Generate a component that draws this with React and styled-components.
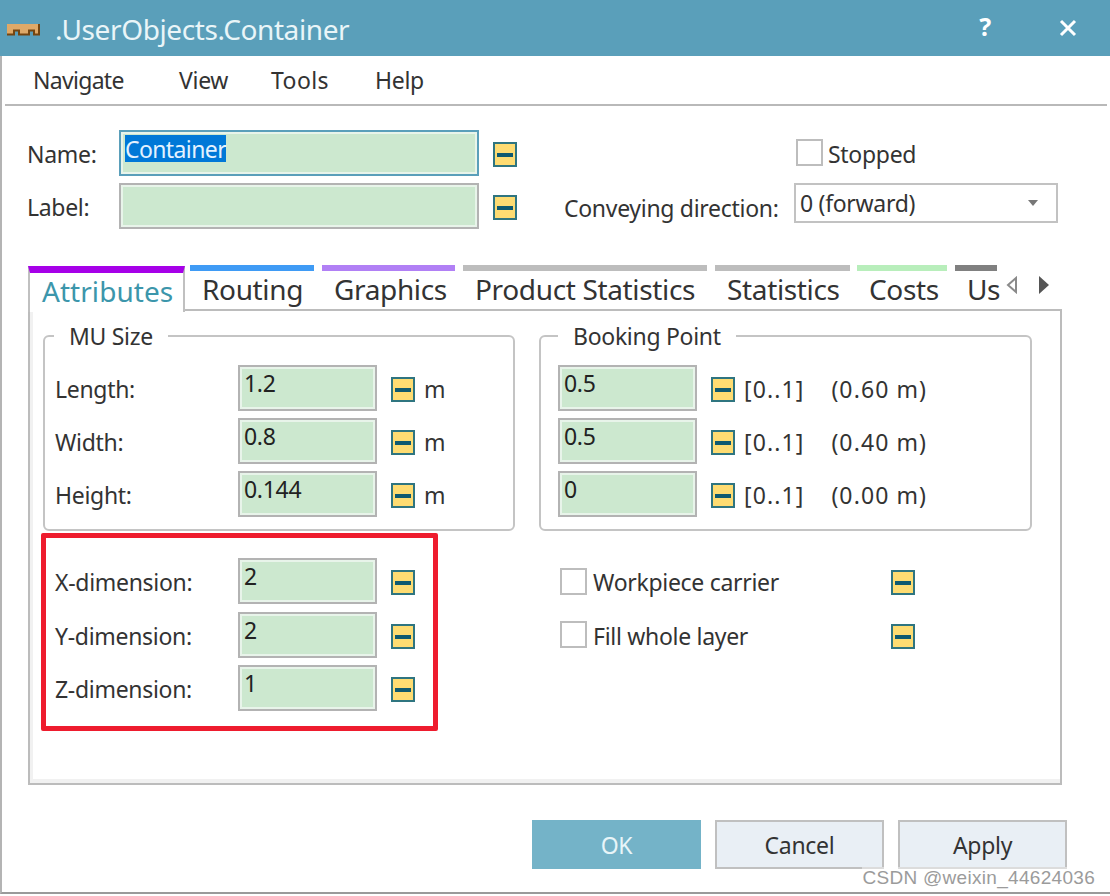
import { createGlobalStyle, styled } from 'styled-components';

const GlobalStyle = createGlobalStyle`
  html, body { margin: 0; padding: 0; background: #fff; }
  body { font-family: "Noto Sans", "Open Sans", sans-serif; color: #333; }
`;

const Window = styled.div`
  position: relative;
  width: 1110px;
  height: 896px;
  box-sizing: border-box;
  padding-bottom: 2px;
  overflow: hidden;
  font-size: 23px;
  letter-spacing: -0.3px;
`;

const Frame = styled.div`
  height: 100%;
  box-sizing: border-box;
  border-left: 2px solid #b4b4b4;
  border-bottom: 2px solid #9a9a9a;
`;

const TitleBar = styled.div`
  display: flex;
  align-items: center;
  height: 56px;
  margin-left: -2px;
  padding: 0 33px 0 7px;
  background: #5a9fba;
  color: #e9f5f8;
`;

const TitleIcon = styled.svg`
  flex: none;
  margin-top: 4px;
`;

const TitleText = styled.span`
  margin-left: 15px;
  margin-top: 1px;
  font-size: 28px;
  letter-spacing: -0.4px;
  flex: 1;
`;

const HelpMark = styled.span`
  margin-right: 68px;
  margin-top: -4px;
  font-size: 25px;
  font-weight: 700;
  color: #fff;
`;

const MenuBar = styled.div`
  display: flex;
  align-items: center;
  height: 48px;
  margin: 0 3px;
  padding-left: 28px;
  border-bottom: 2px solid #b9b9b9;
`;

const MenuItem = styled.span`
  width: ${(p) => p.$width}px;
  letter-spacing: ${(p) => p.$spacing}px;
`;

const Head = styled.div`
  display: flex;
  padding: 24px 0 0 25px;
  height: 159px;
  box-sizing: border-box;
`;

const HeadLeft = styled.div`
  display: grid;
  grid-template-rows: 46px 46px;
  row-gap: 7px;
  align-content: start;
`;

const HeadRow = styled.div`
  display: flex;
  align-items: center;
`;

const HeadLabel = styled.span`
  width: 92px;
  margin-top: 2px;
`;

const Field = styled.div`
  box-sizing: border-box;
  flex: none;
  width: ${(p) => p.$width || 139}px;
  height: 46px;
  padding: 0 0 0 4px;
  background: #cce8cf;
  border: 2px solid ${(p) => (p.$focus ? '#5a9fba' : '#b3b3b3')};
  box-shadow: inset 0 0 0 2px #e8f4ea;
  line-height: 33px;
  color: #222;
`;

const Selected = styled.span`
  display: inline-block;
  margin-top: 3px;
  height: 27px;
  line-height: 28px;
  letter-spacing: -0.6px;
  background: #0078d7;
  color: #e4f2ff;
  vertical-align: top;
`;

const LockButton = styled.span`
  display: block;
  position: relative;
  flex: none;
  box-sizing: border-box;
  width: 24px;
  height: 25px;
  margin-top: 3px;
  margin-left: ${(p) => p.$gap ?? 14}px;
  background: #fedc72;
  border: 2px solid #2f7580;

  &::after {
    content: '';
    position: absolute;
    left: 2px;
    right: 2px;
    top: 9px;
    height: 4px;
    background: #0f5a70;
  }
`;

const HeadRight = styled.div`
  margin-left: 47px;
  display: flex;
  flex-direction: column;
`;

const StoppedRow = styled.div`
  display: flex;
  align-items: flex-start;
  height: 53px;
  padding-left: 232px;
`;

const StoppedBox = styled.span`
  display: block;
  box-sizing: border-box;
  width: 27px;
  height: 27px;
  margin: 9px 5px 0 0;
  border: 2px solid #bdbdbd;
`;

const StoppedText = styled.span`
  margin-top: 7px;
  line-height: 34px;
`;

const CheckBox = styled.span`
  display: block;
  flex: none;
  box-sizing: border-box;
  width: 27px;
  height: 27px;
  margin-right: 6px;
  background: #fff;
  border: 2px solid #bdbdbd;
`;

const DirectionRow = styled.div`
  display: flex;
  align-items: flex-start;
`;

const DirectionLabel = styled.span`
  width: 230px;
  margin-top: 8px;
  line-height: 34px;
  white-space: nowrap;
`;

const SelectBox = styled.div`
  box-sizing: border-box;
  display: flex;
  align-items: center;
  justify-content: space-between;
  width: 264px;
  height: 40px;
  padding: 0 18px 0 4px;
  border: 2px solid #c2c2c2;
  color: #333;
`;

const SelectCaret = styled.span`
  width: 0;
  height: 0;
  border-left: 5px solid transparent;
  border-right: 5px solid transparent;
  border-top: 6px solid #777;
`;

const TabStrip = styled.div`
  display: flex;
  align-items: flex-start;
  position: relative;
  z-index: 1;
  height: 46px;
  margin-left: 26px;
  margin-bottom: -2px;
`;

const Tabs = styled.div`
  display: flex;
  width: 969px;
  font-size: 28px;
  letter-spacing: -0.35px;
`;

const Tab = styled.div`
  flex: none;
  box-sizing: border-box;
  width: ${(p) => p.$width}px;
  height: ${(p) => (p.$active ? 46 : 44)}px;
  margin-right: ${(p) => p.$gap}px;
  padding-left: 12px;
  border-top: ${(p) => (p.$active ? 7 : 6)}px solid ${(p) => p.$color};
  border-left: ${(p) => (p.$active ? '2px solid #c0c0c0' : 'none')};
  border-right: ${(p) => (p.$active ? '2px solid #c0c0c0' : 'none')};
  margin-top: ${(p) => (p.$active ? 1 : 0)}px;
  background: #fff;
  color: ${(p) => (p.$active ? '#3c96ab' : '#333')};
  letter-spacing: ${(p) => (p.$active ? '0.05px' : 'inherit')};
  line-height: 36px;
  white-space: nowrap;
`;

const TabArrows = styled.div`
  display: flex;
  gap: 20px;
  margin: 11px 0 0 9px;
`;

const Panel = styled.div`
  position: relative;
  box-sizing: border-box;
  width: 1034px;
  height: 476px;
  margin-left: 26px;
  padding: 24px 0 0 13px;
  border: 2px solid #bcbcbc;
  box-shadow: inset 3px -4px 0 #f1f1f1;
`;

const Groups = styled.div`
  display: flex;
  gap: 24px;
`;

const Group = styled.div`
  position: relative;
  box-sizing: border-box;
  width: ${(p) => p.$width}px;
  height: 196px;
  padding: 28px 0 0 ${(p) => p.$inset}px;
  border: 2px solid #c4c4c4;
  border-radius: 6px;
  display: flex;
  flex-direction: column;
  gap: 7px;
`;

const Legend = styled.span`
  position: absolute;
  top: -16px;
  left: ${(p) => p.$left}px;
  padding: 0 15px;
  line-height: 30px;
  background: #fff;
  white-space: nowrap;
`;

const Row = styled.div`
  display: flex;
  align-items: center;
  height: 46px;
  white-space: nowrap;
`;

const RowLabel = styled.span`
  width: ${(p) => p.$width}px;
  flex: none;
  margin-top: 2px;
`;

const Unit = styled.span`
  margin-left: ${(p) => p.$gap}px;
  margin-top: 1px;
  letter-spacing: ${(p) => p.$spacing || 0}px;
`;

const Lower = styled.div`
  display: flex;
  margin: 27px 0 0 12px;
`;

const DimColumn = styled.div`
  display: flex;
  flex-direction: column;
  gap: 7.5px;
  width: 505px;
`;

const FlagColumn = styled.div`
  display: flex;
  flex-direction: column;
  gap: 7.5px;
`;

const FlagLabel = styled.span`
  width: 298px;
  margin-top: 2px;
`;

const Footer = styled.div`
  display: flex;
  justify-content: flex-end;
  gap: 14px;
  padding: 35px 43px 0 0;
`;

const DialogButton = styled.div`
  box-sizing: border-box;
  width: 169px;
  height: 49px;
  display: flex;
  align-items: center;
  justify-content: center;
  background: ${(p) => (p.$primary ? '#74b3c8' : '#e9eff5')};
  border: 2px solid ${(p) => (p.$primary ? '#74b3c8' : '#c0c0c0')};
  color: ${(p) => (p.$primary ? '#e8f5f8' : '#333')};
`;

// annotation drawn over the dialog
const Highlight = styled.div`
  position: absolute;
  left: 41px;
  top: 533px;
  width: 397px;
  height: 198px;
  box-sizing: border-box;
  border: 5px solid #ee1c2e;
  border-radius: 2px;
`;

const Watermark = styled.div`
  position: absolute;
  right: 15px;
  top: 867px;
  font-family: "Liberation Sans", Arial, sans-serif;
  font-size: 19px;
  letter-spacing: 0.3px;
  color: #9b9b9b;
  background: rgba(255, 255, 255, 0.45);
`;

function ContainerIcon() {
  return (
    <TitleIcon width="33" height="13" viewBox="0 0 33 13">
      <path d="M0 0h33v11h-6V7h-5v4H12V7H7v4H0z" fill="#dfa968" />
      <path d="M0 10.5h7V6.5h5v4h10V6.5h5v4h5V0" fill="none" stroke="#744510" strokeWidth="2" />
    </TitleIcon>
  );
}

function CloseIcon() {
  return (
    <svg width="18" height="18" viewBox="0 0 18 18">
      <path d="M2 2l14 14M16 2L2 16" stroke="#fff" strokeWidth="3" />
    </svg>
  );
}

function ArrowLeft() {
  return (
    <svg width="12" height="18" viewBox="0 0 12 18">
      <path d="M10 2v14L2 9z" fill="#fff" stroke="#8a8a8a" strokeWidth="2" />
    </svg>
  );
}

function ArrowRight() {
  return (
    <svg width="12" height="18" viewBox="0 0 12 18">
      <path d="M1 0v18l10-9z" fill="#555" />
    </svg>
  );
}

const tabs = [
  { name: 'Attributes', width: 157, gap: 5, color: '#a600e8', active: true },
  { name: 'Routing', width: 124, gap: 8, color: '#3f9bf5' },
  { name: 'Graphics', width: 133, gap: 8, color: '#b180f5' },
  { name: 'Product Statistics', width: 244, gap: 8, color: '#bdbdbd' },
  { name: 'Statistics', width: 135, gap: 7, color: '#bdbdbd' },
  { name: 'Costs', width: 90, gap: 8, color: '#b8eebb' },
  { name: 'Us', width: 42, gap: 0, color: '#808080' },
];

const sizes = [
  { label: 'Length:', value: '1.2' },
  { label: 'Width:', value: '0.8' },
  { label: 'Height:', value: '0.144' },
];

const booking = [
  { value: '0.5', result: '(0.60 m)' },
  { value: '0.5', result: '(0.40 m)' },
  { value: '0', result: '(0.00 m)' },
];

const dimensions = [
  { label: 'X-dimension:', value: '2' },
  { label: 'Y-dimension:', value: '2' },
  { label: 'Z-dimension:', value: '1' },
];

export default function App() {
  return (
    <Window>
      <GlobalStyle />
      <Frame>
        <TitleBar>
          <ContainerIcon />
          <TitleText>.UserObjects.Container</TitleText>
          <HelpMark>?</HelpMark>
          <CloseIcon />
        </TitleBar>
        <MenuBar>
          <MenuItem $width={146} $spacing={-0.7}>Navigate</MenuItem>
          <MenuItem $width={92} $spacing={-0.3}>View</MenuItem>
          <MenuItem $width={104} $spacing={0.4}>Tools</MenuItem>
          <MenuItem $width={60} $spacing={-0.3}>Help</MenuItem>
        </MenuBar>
        <Head>
          <HeadLeft>
            <HeadRow>
              <HeadLabel>Name:</HeadLabel>
              <Field $width={360} $focus><Selected>Container</Selected></Field>
              <LockButton />
            </HeadRow>
            <HeadRow>
              <HeadLabel>Label:</HeadLabel>
              <Field $width={360} />
              <LockButton />
            </HeadRow>
          </HeadLeft>
          <HeadRight>
            <StoppedRow>
              <StoppedBox />
              <StoppedText>Stopped</StoppedText>
            </StoppedRow>
            <DirectionRow>
              <DirectionLabel>Conveying direction:</DirectionLabel>
              <SelectBox>
                0 (forward)
                <SelectCaret />
              </SelectBox>
            </DirectionRow>
          </HeadRight>
        </Head>
        <TabStrip>
          <Tabs>
            {tabs.map((t) => (
              <Tab key={t.name} $width={t.width} $gap={t.gap} $color={t.color} $active={t.active}>
                {t.name}
              </Tab>
            ))}
          </Tabs>
          <TabArrows>
            <ArrowLeft />
            <ArrowRight />
          </TabArrows>
        </TabStrip>
        <Panel>
          <Groups>
            <Group $width={472} $inset={10}>
              <Legend $left={9}>MU Size</Legend>
              {sizes.map((s) => (
                <Row key={s.label}>
                  <RowLabel $width={183}>{s.label}</RowLabel>
                  <Field>{s.value}</Field>
                  <LockButton />
                  <Unit $gap={9}>m</Unit>
                </Row>
              ))}
            </Group>
            <Group $width={493} $inset={17}>
              <Legend $left={17}>Booking Point</Legend>
              {booking.map((b, i) => (
                <Row key={i}>
                  <Field>{b.value}</Field>
                  <LockButton />
                  <Unit $gap={9} $spacing={1.1}>[0..1]</Unit>
                  <Unit $gap={27} $spacing={1.1}>{b.result}</Unit>
                </Row>
              ))}
            </Group>
          </Groups>
          <Lower>
            <DimColumn>
              {dimensions.map((d) => (
                <Row key={d.label}>
                  <RowLabel $width={183}>{d.label}</RowLabel>
                  <Field>{d.value}</Field>
                  <LockButton />
                </Row>
              ))}
            </DimColumn>
            <FlagColumn>
              <Row>
                <CheckBox />
                <FlagLabel>Workpiece carrier</FlagLabel>
                <LockButton $gap={0} />
              </Row>
              <Row>
                <CheckBox />
                <FlagLabel>Fill whole layer</FlagLabel>
                <LockButton $gap={0} />
              </Row>
            </FlagColumn>
          </Lower>
        </Panel>
        <Footer>
          <DialogButton $primary>OK</DialogButton>
          <DialogButton>Cancel</DialogButton>
          <DialogButton>Apply</DialogButton>
        </Footer>
      </Frame>
      <Highlight />
      <Watermark>CSDN @weixin_44624036</Watermark>
    </Window>
  );
}
